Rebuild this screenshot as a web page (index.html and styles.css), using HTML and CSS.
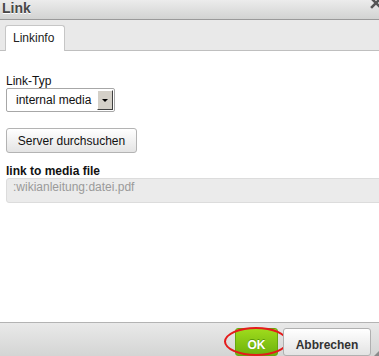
FILE: index.html
```html
<!DOCTYPE html>
<html lang="de">
<head>
    <meta charset="UTF-8">
    <meta name="viewport" content="width=device-width, initial-scale=1.0">
    <title>Link</title>
    <link rel="stylesheet" href="styles.css">
</head>
<body>
    <div class="dialog">
        <!-- Title bar -->
        <div class="title">
            Link
            <span class="close">
                <svg width="12" height="12" viewBox="0 0 12 12">
                    <path d="M2 2 L10 10 M10 2 L2 10" stroke="#555" stroke-width="2.6" stroke-linecap="square"/>
                </svg>
            </span>
        </div>

        <!-- Tabs -->
        <div class="tabs">
            <div class="tab">Linkinfo</div>
        </div>

        <!-- Contents -->
        <div class="contents">
            <div class="label">Link-Typ</div>
            <div class="select">
                <span class="select-value">internal media</span>
                <span class="select-arrow"><span class="tri"></span></span>
            </div>

            <button class="btn browse">Server durchsuchen</button>

            <div class="label strong">link to media file</div>
            <div class="input">:wikianleitung:datei.pdf</div>
        </div>

        <!-- Footer -->
        <div class="footer">
            <button class="btn-foot ok">OK<span class="ring"></span></button>
            <button class="btn-foot cancel">Abbrechen</button>
            <span class="grip"></span>
        </div>
    </div>
</body>
</html>
```

FILE: styles.css
```css
body {
    margin: 0;
    padding: 0;
    font-family: "Liberation Sans", Arial, sans-serif;
    font-size: 12px;
    color: #000;
    background: #fff;
}

.dialog {
    width: 379px;
    height: 356px;
    overflow: hidden;
    display: flex;
    flex-direction: column;
    position: relative;
}

/* Title bar */
.title {
    height: 19px;
    flex: none;
    box-sizing: content-box;
    padding: 1px 0 0 2px;
    height: 18px;
    font-size: 14px;
    line-height: 14px;
    font-weight: bold;
    color: #474747;
    text-shadow: 0 1px 0 #fff;
    background: linear-gradient(to bottom, #ececec, #d2d3d2);
    border-bottom: 1px solid #9a9a9a;
    position: relative;
}

.close {
    position: absolute;
    left: 370px;
    top: -3px;
    width: 12px;
    height: 12px;
}

/* Tabs */
.tabs {
    flex: none;
    height: 30px;
    padding-left: 5px;
    display: flex;
    align-items: flex-end;
    background-color: #e9e9e9;
    border-bottom: 1px solid #bfbfbf;
}

.tab {
    box-sizing: border-box;
    width: 60px;
    height: 26px;
    margin-bottom: -1px;
    padding-left: 7px;
    line-height: 24px;
    background: #fff;
    border: 1px solid #c6c6c6;
    border-bottom: none;
    border-radius: 3px 3px 0 0;
    color: #222;
}

/* Contents */
.contents {
    flex: 1;
    padding: 23px 0 0 6px;
    background: #fff;
}

.label {
    line-height: 14px;
    color: #111;
}

.label.strong {
    margin-top: 12px;
    line-height: 13px;
    font-weight: bold;
}

.select {
    box-sizing: border-box;
    width: 109px;
    height: 24px;
    display: flex;
    border: 1px solid #a7a7a7;
    border-radius: 2px;
    background: #fff;
}

.select-value {
    flex: 1;
    padding-left: 9px;
    line-height: 22px;
    color: #111;
}

.select-arrow {
    box-sizing: border-box;
    width: 16px;
    margin: 1px 1px 1px 0;
    background: #d4d0c8;
    border-top: 1px solid #fff;
    border-left: 1px solid #fff;
    border-right: 1px solid #404040;
    border-bottom: 1px solid #404040;
    display: flex;
    align-items: center;
    justify-content: center;
}

.tri {
    width: 0;
    height: 0;
    border-left: 3px solid transparent;
    border-right: 3px solid transparent;
    border-top: 3px solid #000;
}

.btn {
    display: block;
    box-sizing: border-box;
    margin-top: 16px;
    width: 131px;
    height: 25px;
    padding: 0;
    font-family: inherit;
    font-size: 12px;
    color: #111;
    background: linear-gradient(to bottom, #ffffff, #e4e4e4);
    border: 1px solid #b3b3b3;
    border-radius: 3px;
}

.input {
    box-sizing: border-box;
    width: 380px;
    height: 25px;
    padding-left: 6px;
    line-height: 16px;
    color: #9a9a9a;
    background: #ebebeb;
    border: 1px solid #dcdcdc;
    border-radius: 3px;
}

/* Footer */
.footer {
    flex: none;
    height: 33px;
    box-sizing: content-box;
    padding: 5px 8px 0 0;
    display: flex;
    justify-content: flex-end;
    align-items: flex-start;
    gap: 5px;
    background: linear-gradient(to bottom, #e9e9e9, #d4d5d4);
    border-top: 1px solid #b3b3b3;
    position: relative;
    height: 28px;
}

.btn-foot {
    box-sizing: border-box;
    height: 28px;
    padding: 5px 0 0;
    line-height: 18px;
    vertical-align: top;
    font-family: inherit;
    font-size: 12px;
    font-weight: bold;
    border-radius: 3px;
    position: relative;
}

.ok {
    width: 43px;
    margin-top: 0;
    color: #fff;
    text-shadow: 0 -1px 0 #5b9a0a;
    background: linear-gradient(to bottom, #9fdb1c, #6db20d);
    border: 1px solid #65a80f;
}

.cancel {
    width: 88px;
    color: #333;
    background: linear-gradient(to bottom, #ffffff, #e3e3e3);
    border: 1px solid #b0b0b0;
}

/* red highlight ring drawn over the OK button */
.ring {
    position: absolute;
    left: -12px;
    top: -2px;
    width: 64px;
    height: 29px;
    box-sizing: border-box;
    border: 2px solid #e41b1b;
    border-radius: 50%;
}

.grip {
    position: absolute;
    right: 0;
    bottom: 0;
    width: 0;
    height: 0;
    border-left: 5px solid transparent;
    border-bottom: 5px solid #8a8a8a;
}
```
